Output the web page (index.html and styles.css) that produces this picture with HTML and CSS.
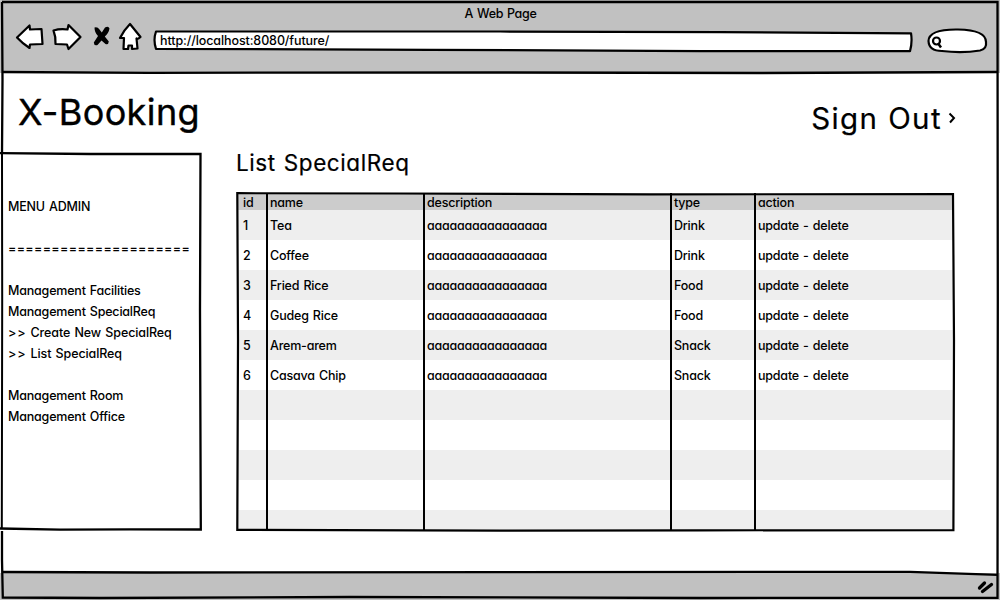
FILE: index.html
```html
<!DOCTYPE html>
<html lang="en">
<head>
<meta charset="utf-8">
<title>A Web Page</title>
<link rel="stylesheet" href="styles.css">
</head>
<body>
<div class="window">
  <header class="chrome">
    <div class="window-title">A Web Page</div>
    <div class="toolbar">
      <svg class="nav-icons" width="134" height="34" viewBox="12 20 134 34">
        <g fill="#fff" stroke="#000" stroke-width="2.2" stroke-linejoin="round" stroke-linecap="round">
          <path d="M17 37.500L29.500 25.500L30 29.500L41.500 29L42.500 44L30 44.500L29.500 48Q22 43 17 37.500Z"/>
          <path d="M53.500 30.500Q60 28.500 67.500 29.500L68.500 25L80.500 37L68.500 49L67 44.500L55.500 44Q56 37 53.500 30.500Z"/>
          <path d="M130 24L140.500 37Q138 39.500 136.500 38.500L137.500 48.500L132 49V45.500H128.500L128 49L123.500 49L124 38L120 38Q124 30 130 24Z"/>
        </g>
        <path d="M94.500 27.500Q97.500 26.500 99.500 29.500L101.800 32.500L105 27.500Q108.500 25.500 109.500 28.500Q108.800 33 104.800 36.500L108.800 41.500Q108.500 45 105.500 44L101.500 40.500L97.500 45Q94 46 93.800 42.500L98 36Q94.500 32.500 94.500 27.500Z"/>
      </svg>
      <div class="address">
        <svg class="outline" width="762" height="24" viewBox="152 29 762 24"><path d="M156 31.500L500 31.500L720 32.200L911 33.300Q912.500 42 910 51.200L700 51.200L430 49.800L156 48.800Q153 40 156 31.500Z" fill="#fff" stroke="#000" stroke-width="2.2" stroke-linejoin="round"/></svg>
        <span class="url">http://localhost:8080/future/</span>
      </div>
      <svg class="search" width="62" height="28" viewBox="927 27 62 28">
        <path d="M928.500 41Q929 29 958 29.500Q986 30 986 42Q987 49 980 50.500Q962 53.500 942 51Q929 51 928.500 41Z" fill="#fff" stroke="#000" stroke-width="2.200"/>
        <circle cx="936.500" cy="41" r="3.500" fill="none" stroke="#000" stroke-width="2.200"/><path d="M938.500 44L941 47.500" stroke="#000" stroke-width="2.500"/>
      </svg>
    </div>
  </header>
  <main class="page">
    <div class="masthead">
      <h1 class="brand">X-Booking</h1>
      <div class="sign-out"><span>Sign Out</span><svg width="9" height="14" viewBox="0 0 9 14"><path d="M1.500 2.500L6 7L2 11.500" fill="none" stroke="#000" stroke-width="2"/></svg></div>
    </div>
    <div class="columns">
      <nav class="sidebar">
        <svg class="outline" width="204" height="380" viewBox="0 152 204 380"><path d="M0 153.200L90 154L200.500 154L200 310L200.800 529.500L130 529.300L60 529.600L0 528.500" fill="#fff" stroke="#000" stroke-width="2.300"/><path d="M2 152L2.200 300L1.800 528.500" fill="none" stroke="#000" stroke-width="2"/></svg>
        <ul class="menu">
          <li class="menu-title">MENU ADMIN</li>
          <li></li>
          <li class="rule">=====================</li>
          <li></li>
          <li>Management Facilities</li>
          <li>Management SpecialReq</li>
          <li class="sub"><span class="marker">&gt;&gt;</span> Create New SpecialReq</li>
          <li class="sub"><span class="marker">&gt;&gt;</span> List SpecialReq</li>
          <li></li>
          <li>Management Room</li>
          <li>Management Office</li>
        </ul>
      </nav>
      <section class="content">
        <h2 class="heading">List SpecialReq</h2>
        <div class="grid">
          <div class="row head"><span>id</span><span>name</span><span>description</span><span>type</span><span>action</span></div>
          <div class="row"><span>1</span><span>Tea</span><span class="desc">aaaaaaaaaaaaaaaa</span><span>Drink</span><span>update - delete</span></div>
          <div class="row"><span>2</span><span>Coffee</span><span class="desc">aaaaaaaaaaaaaaaa</span><span>Drink</span><span>update - delete</span></div>
          <div class="row"><span>3</span><span>Fried Rice</span><span class="desc">aaaaaaaaaaaaaaaa</span><span>Food</span><span>update - delete</span></div>
          <div class="row"><span>4</span><span>Gudeg Rice</span><span class="desc">aaaaaaaaaaaaaaaa</span><span>Food</span><span>update - delete</span></div>
          <div class="row"><span>5</span><span>Arem-arem</span><span class="desc">aaaaaaaaaaaaaaaa</span><span>Snack</span><span>update - delete</span></div>
          <div class="row"><span>6</span><span>Casava Chip</span><span class="desc">aaaaaaaaaaaaaaaa</span><span>Snack</span><span>update - delete</span></div>
          <div class="row"></div><div class="row"></div><div class="row"></div><div class="row"></div><div class="row"></div>
          <svg class="outline" width="720" height="340" viewBox="236 192 720 340"><g fill="none" stroke="#000" stroke-width="2.200"><path d="M237.300 193.200L400 193.500L650 194.400L953 194L954 340L953.400 530.200L700 530.300L500 530.600L237.300 529.800L238 340Z"/><path stroke-width="2" d="M267 193V531M424 193V531M671 193V531M755 193V531"/></g></svg>
        </div>
      </section>
    </div>
  </main>
  <footer class="status">
    <svg class="grip" width="18" height="16" viewBox="0 0 18 16"><path d="M2.500 9L7.500 4M5.500 12.500L14.500 5.500" stroke="#000" stroke-width="3.300" stroke-linecap="round"/></svg>
  </footer>
  <svg class="outline" width="1000" height="600" viewBox="0 0 1000 600"><g fill="none" stroke="#000" stroke-width="2.300"><path d="M2 2L500 2L997.500 2L997.800 300L997.500 597.800L700 598L350 597L100 598L2.800 597.500L2 560V531M2 153L2.500 80L2 2"/><path d="M2 72L150 72.800L500 72.500L760 73L998 72M2 572L150 572.500L500 572.200L910 571.800L998 574.800"/></g></svg>
</div>
</body>
</html>
```

FILE: styles.css
```css
* { box-sizing: border-box; }
body { margin: 0; font-family: Inter, "Liberation Sans", sans-serif; font-feature-settings: "cv11"; font-size: 12.500px; font-weight: 500; letter-spacing: -0.2px; word-spacing: 1px; color: #000; background: #fff; }
h1, h2, ul { margin: 0; padding: 0; list-style: none; }
.window { position: relative; width: 1000px; height: 600px; display: flex; flex-direction: column; overflow: hidden; }
.outline { position: absolute; left: 0; top: 0; pointer-events: none; }
.chrome { height: 73px; padding: 5px 11px 0 12px; background: #c1c1c1; }
.window-title { height: 15px; line-height: 17px; text-align: center; letter-spacing: -0.350px; }
.toolbar { display: flex; height: 34px; }
.nav-icons { margin-right: 6px; flex: none; }
.address { position: relative; width: 762px; height: 24px; margin: 9px 13px 0 0; padding-left: 8px; line-height: 23px; flex: none; }
.url { position: relative; letter-spacing: -0.100px; }
.search { margin-top: 7px; flex: none; }
.page { height: 500px; display: flex; flex-direction: column; }
.masthead { height: 79px; display: flex; justify-content: space-between; padding: 0 43px 0 18px; }
.brand { font-size: 36px; font-weight: 400; -webkit-text-stroke: 0.400px #000; letter-spacing: 0.400px; line-height: 44px; padding-top: 17px; }
.sign-out { display: flex; align-items: center; gap: 6px; height: 40px; margin-top: 25px; font-size: 29.500px; font-weight: 400; -webkit-text-stroke: 0.200px #000; letter-spacing: 1.400px; word-spacing: 0; }
.columns { display: flex; gap: 32px; }
.sidebar { position: relative; width: 204px; height: 380px; padding: 44px 0 0 8px; }
.menu { position: relative; line-height: 21px; white-space: nowrap; }
.menu li { height: 21px; }
.menu .rule { letter-spacing: 0.330px; }
.menu .sub { letter-spacing: -0.100px; }
.menu .marker { letter-spacing: 0.800px; }
.content { width: 720px; }
.heading { height: 40px; line-height: 22px; font-size: 22.500px; font-weight: 400; -webkit-text-stroke: 0.200px #000; letter-spacing: 0.600px; }
.grid { position: relative; width: 720px; height: 340px; padding: 2px; overflow: hidden; }
.row { display: grid; grid-template-columns: 29px 157px 247px 84px 199px; height: 30px; line-height: 31px; }
.row span { padding-left: 3px; white-space: nowrap; }
.row span:first-child { padding-left: 5px; }
.row .desc { letter-spacing: -0.230px; }
.row:nth-child(even) { background: #eee; }
.row:nth-child(12) { height: 20px; }
.row.head { height: 16px; line-height: 17px; background: #ccc; }
.status { display: flex; justify-content: flex-end; height: 27px; padding: 6px 5px 0 0; background: #c1c1c1; }
```
